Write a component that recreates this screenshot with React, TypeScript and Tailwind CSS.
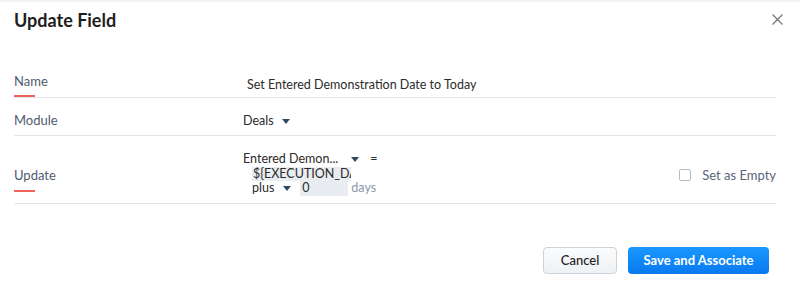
import React from "react";

const Caret = () => (
  <svg width="8" height="5" viewBox="0 0 8 5" className="inline-block">
    <path d="M0 0h8L4 5z" fill="#2f4a63" />
  </svg>
);

export default function App() {
  return (
    <div
      className="w-[800px] h-[285px] bg-white overflow-hidden text-[#2b2b2b]"
      style={{ fontFamily: "Lato, 'Open Sans', sans-serif" }}
    >
      <div className="h-[3px] bg-gradient-to-b from-[#efefef] to-white" />
      <div className="flex items-center justify-between pl-[14px] pr-[17px] pt-[3px] h-[30px]">
        <h1 className="text-[18px] leading-[24px] font-bold text-[#1e1e1e]">Update Field</h1>
        <svg width="11" height="11" viewBox="0 0 11 11">
          <path d="M0.5 0.5l10 10M10.5 0.5l-10 10" stroke="#777" strokeWidth="1.2" />
        </svg>
      </div>

      <div className="ml-[14px] mr-[24px] mt-[37px] text-[12.5px]">
        {/* Name */}
        <div className="flex items-start border-b border-[#dfe6ee] h-[28px]">
          <div className="w-[229px] shrink-0 flex flex-col pt-[2px]">
            <span className="text-[13px] text-[#4f5b6e] leading-[18px]">Name</span>
            <span className="mt-[5px] w-[21px] h-[2px] bg-[#f0625c]" />
          </div>
          <span className="ml-[4px] pt-[6px] leading-[18px]">
            Set Entered Demonstration Date to Today
          </span>
        </div>

        {/* Module */}
        <div className="flex items-start border-b border-[#dfe6ee] h-[38px]">
          <div className="w-[229px] shrink-0 pt-[13px] text-[13px] leading-[18px] text-[#4f5b6e]">
            Module
          </div>
          <span className="pt-[14px] leading-[18px] flex items-center gap-[8px]">
            Deals <Caret />
          </span>
        </div>

        {/* Update */}
        <div className="flex items-start border-b border-[#dfe6ee] h-[68px]">
          <div className="w-[229px] shrink-0 flex flex-col pt-[30px]">
            <span className="text-[13px] text-[#4f5b6e] leading-[18px]">Update</span>
            <span className="mt-[6px] w-[21px] h-[2px] bg-[#f0625c]" />
          </div>
          <div className="flex flex-col leading-[14.5px] pt-[16px]">
            <div className="flex items-center">
              <span>Entered Demon...</span>
              <span className="ml-[13px] flex"><Caret /></span>
              <span className="ml-[11px]">=</span>
            </div>
            <div className="ml-[9px] w-[99px] bg-[#e9ecf0] overflow-hidden whitespace-nowrap pl-[1px]">
              {"${EXECUTION_DATE}"}
            </div>
            <div className="ml-[9px] flex items-center">
              <span>plus</span>
              <span className="ml-[9px] flex"><Caret /></span>
              <span className="ml-[9px] w-[48px] bg-[#e9ecf0] pl-[2px]">0</span>
              <span className="ml-[3px] text-[#8a97ab]">days</span>
            </div>
          </div>
          <div className="ml-auto flex items-center gap-[11px] pt-[30px]">
            <span className="w-[12px] h-[12px] border border-[#b5bcc6] rounded-[2px] bg-white" />
            <span className="text-[13px] leading-[18px] text-[#5a6478]">Set as Empty</span>
          </div>
        </div>
      </div>

      <div className="flex justify-end gap-[11px] pr-[31px] mt-[43px]">
        <button className="w-[74px] h-[27px] rounded-[4px] border border-[#ccd2da] bg-gradient-to-b from-[#fbfcfd] to-[#eef1f4] text-[13px] text-[#222] font-medium">
          Cancel
        </button>
        <button className="w-[141px] h-[27px] rounded-[4px] bg-gradient-to-b from-[#1a98ff] to-[#0a79f0] text-[13px] text-white font-bold">
          Save and Associate
        </button>
      </div>
    </div>
  );
}
